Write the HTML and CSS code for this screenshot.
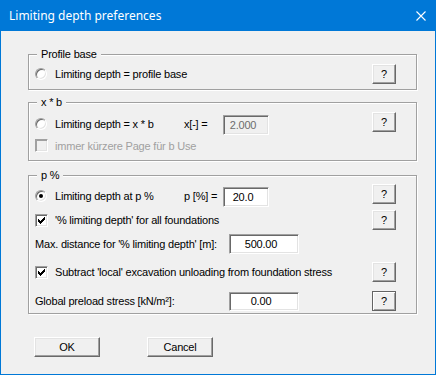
FILE: index.html
```html
<!DOCTYPE html>
<html>
<head>
<meta charset="utf-8">
<link rel="stylesheet" href="styles.css">
</head>
<body>
<div class="window">
  <div class="titlebar">
    <span class="title">Limiting depth preferences</span>
    <svg class="close" width="10" height="10" viewBox="0 0 10 10"><path d="M0.5 0.5L9.5 9.5M9.5 0.5L0.5 9.5" stroke="#fff" stroke-width="1.1" fill="none"/></svg>
  </div>
  <div class="client">
    <fieldset class="group g1">
      <legend>Profile base</legend>
      <div class="row">
        <span class="radio"></span>
        <span class="lbl">Limiting depth = profile base</span>
        <button class="help">?</button>
      </div>
    </fieldset>

    <fieldset class="group g2">
      <legend>x * b</legend>
      <div class="row tall">
        <span class="radio"></span>
        <span class="lbl w129">Limiting depth = x * b</span>
        <span class="lbl w39">x[-] =</span>
        <span class="field w46 disabled">2.000</span>
        <button class="help top">?</button>
      </div>
      <div class="row r-dis">
        <span class="check disabled"></span>
        <span class="lbl gray">immer kürzere Page für b Use</span>
      </div>
    </fieldset>

    <fieldset class="group g3">
      <legend>p %</legend>
      <div class="row tall">
        <span class="radio on"></span>
        <span class="lbl w129">Limiting depth at p %</span>
        <span class="lbl w39">p [%] =</span>
        <span class="field w46">20.0</span>
        <button class="help top">?</button>
      </div>
      <div class="row r2">
        <span class="check"><svg width="11" height="11" viewBox="0 0 11 11"><path d="M2 4h1v3h-1zM3 5h1v3h-1zM4 6h1v3h-1zM5 5h1v3h-1zM6 4h1v3h-1zM7 3h1v3h-1zM8 2h1v3h-1z" fill="#000"/></svg></span>
        <span class="lbl">'% limiting depth' for all foundations</span>
        <button class="help">?</button>
      </div>
      <div class="row r3">
        <span class="lbl w194">Max. distance for '% limiting depth' [m]:</span>
        <span class="field w70">500.00</span>
      </div>
      <div class="row r4">
        <span class="check"><svg width="11" height="11" viewBox="0 0 11 11"><path d="M2 4h1v3h-1zM3 5h1v3h-1zM4 6h1v3h-1zM5 5h1v3h-1zM6 4h1v3h-1zM7 3h1v3h-1zM8 2h1v3h-1z" fill="#000"/></svg></span>
        <span class="lbl">Subtract 'local' excavation unloading from foundation stress</span>
        <button class="help">?</button>
      </div>
      <div class="row r5">
        <span class="lbl w194">Global preload stress [kN/m²]:</span>
        <span class="field w70 short">0.00</span>
        <button class="help default">?</button>
      </div>
    </fieldset>

    <div class="footer">
      <button class="btn">OK</button>
      <button class="btn">Cancel</button>
    </div>
  </div>
</div>
</body>
</html>
```
FILE: styles.css
```css
html, body {
  margin: 0;
  padding: 0;
}
body {
  font-family: "Liberation Sans", Arial, sans-serif;
  font-size: 11px;
  letter-spacing: -0.2px;
  color: #000;
  background: #f0f0f0;
}
.window {
  width: 436px;
  height: 375px;
  display: flex;
  flex-direction: column;
}
.titlebar {
  height: 31px;
  flex: none;
  background: #0078d7;
  color: #fff;
  display: flex;
  align-items: center;
  padding: 0 10px 0 9px;
  font-family: "Noto Sans", "Open Sans", sans-serif;
  font-size: 12px;
  letter-spacing: 0;
}
.title {
  padding-bottom: 1px;
}
.close {
  margin-left: auto;
  display: block;
}
.client {
  flex: 1;
  border: 1px solid #0078d7;
  border-top: 0;
  background: #f0f0f0;
  padding: 17px 18px 0 27px;
}
.group {
  margin: 0;
  min-width: 0;
  border: 1px solid #a0a0a0;
  box-shadow: 1px 1px 0 #fff, inset 1px 1px 0 #fff;
  padding: 3px 20px 5px 6px;
}
.group legend {
  margin-left: 2px;
  padding: 0 4px;
  line-height: 13px;
  font-size: 11px;
  background: #f0f0f0;
}
.g2 {
  margin-top: 6px;
  padding-bottom: 8px;
}
.g3 {
  margin-top: 8px;
  padding-top: 2px;
  padding-bottom: 2px;
}
.row {
  display: flex;
  align-items: center;
  height: 20px;
}
.row.tall {
  height: 23px;
}
.r-dis {
  height: 13px;
  margin-top: 4px;
}
.r2 { margin-top: 3px; }
.r3 { margin-top: 4px; }
.r4 { margin-top: 8px; }
.r5 { margin-top: 9px; }

.lbl {
  white-space: nowrap;
  flex: none;
}
.w129 { width: 129px; }
.w39 { width: 39px; }
.w194 { width: 194px; }
.gray { color: #a0a0a0; }

.radio {
  flex: none;
  box-sizing: border-box;
  width: 12px;
  height: 12px;
  margin-right: 8px;
  border-radius: 50%;
  border: 1px solid;
  border-color: #a0a0a0 #ffffff #ffffff #a0a0a0;
  background: #fff;
  box-shadow: inset 1px 1px 0 #696969, inset -1px -1px 0 #e3e3e3;
  display: grid;
  place-items: center;
}
.radio.on::after {
  content: "";
  width: 4px;
  height: 4px;
  border-radius: 50%;
  background: #000;
}
.check {
  flex: none;
  box-sizing: border-box;
  width: 13px;
  height: 13px;
  margin-right: 7px;
  border: 1px solid;
  border-color: #a0a0a0 #ffffff #ffffff #a0a0a0;
  background: #fff;
  box-shadow: inset 1px 1px 0 #696969, inset -1px -1px 0 #e3e3e3;
}
.check svg {
  display: block;
}
.check.disabled {
  background: #f0f0f0;
  box-shadow: inset 1px 1px 0 #a0a0a0, inset -1px -1px 0 #e3e3e3;
}

.field {
  flex: none;
  box-sizing: border-box;
  height: 20px;
  line-height: 18px;
  border: 1px solid;
  border-color: #a0a0a0 #ffffff #ffffff #a0a0a0;
  box-shadow: inset 1px 1px 0 #696969, inset -1px -1px 0 #e3e3e3;
  background: #fff;
  text-align: center;
  padding-right: 6px;
  white-space: nowrap;
}
.row.tall .field {
  align-self: flex-end;
}
.field.short {
  height: 19px;
  line-height: 17px;
}
.w46 { width: 46px; }
.w70 { width: 70px; }
.field.disabled {
  background: #f0f0f0;
  color: #6d6d6d;
}

button {
  font-family: inherit;
  font-size: 11px;
  letter-spacing: inherit;
  color: #000;
  padding: 0;
  margin: 0;
  background: #f0f0f0;
  border: 1px solid;
  border-color: #ffffff #696969 #696969 #ffffff;
  box-shadow: inset -1px -1px 0 #a0a0a0, inset 1px 1px 0 #e3e3e3;
  border-radius: 0;
  box-sizing: border-box;
}
.help {
  width: 24px;
  height: 20px;
  margin-left: auto;
  flex: none;
}
.help.top {
  align-self: flex-start;
}
.help.default {
  border-color: #646464;
  box-shadow: inset 1px 1px 0 #ffffff, inset -1px -1px 0 #a0a0a0;
}
.footer {
  display: flex;
  gap: 47px;
  margin-top: 23px;
  padding-left: 6px;
}
.btn {
  width: 66px;
  height: 20px;
}
```
